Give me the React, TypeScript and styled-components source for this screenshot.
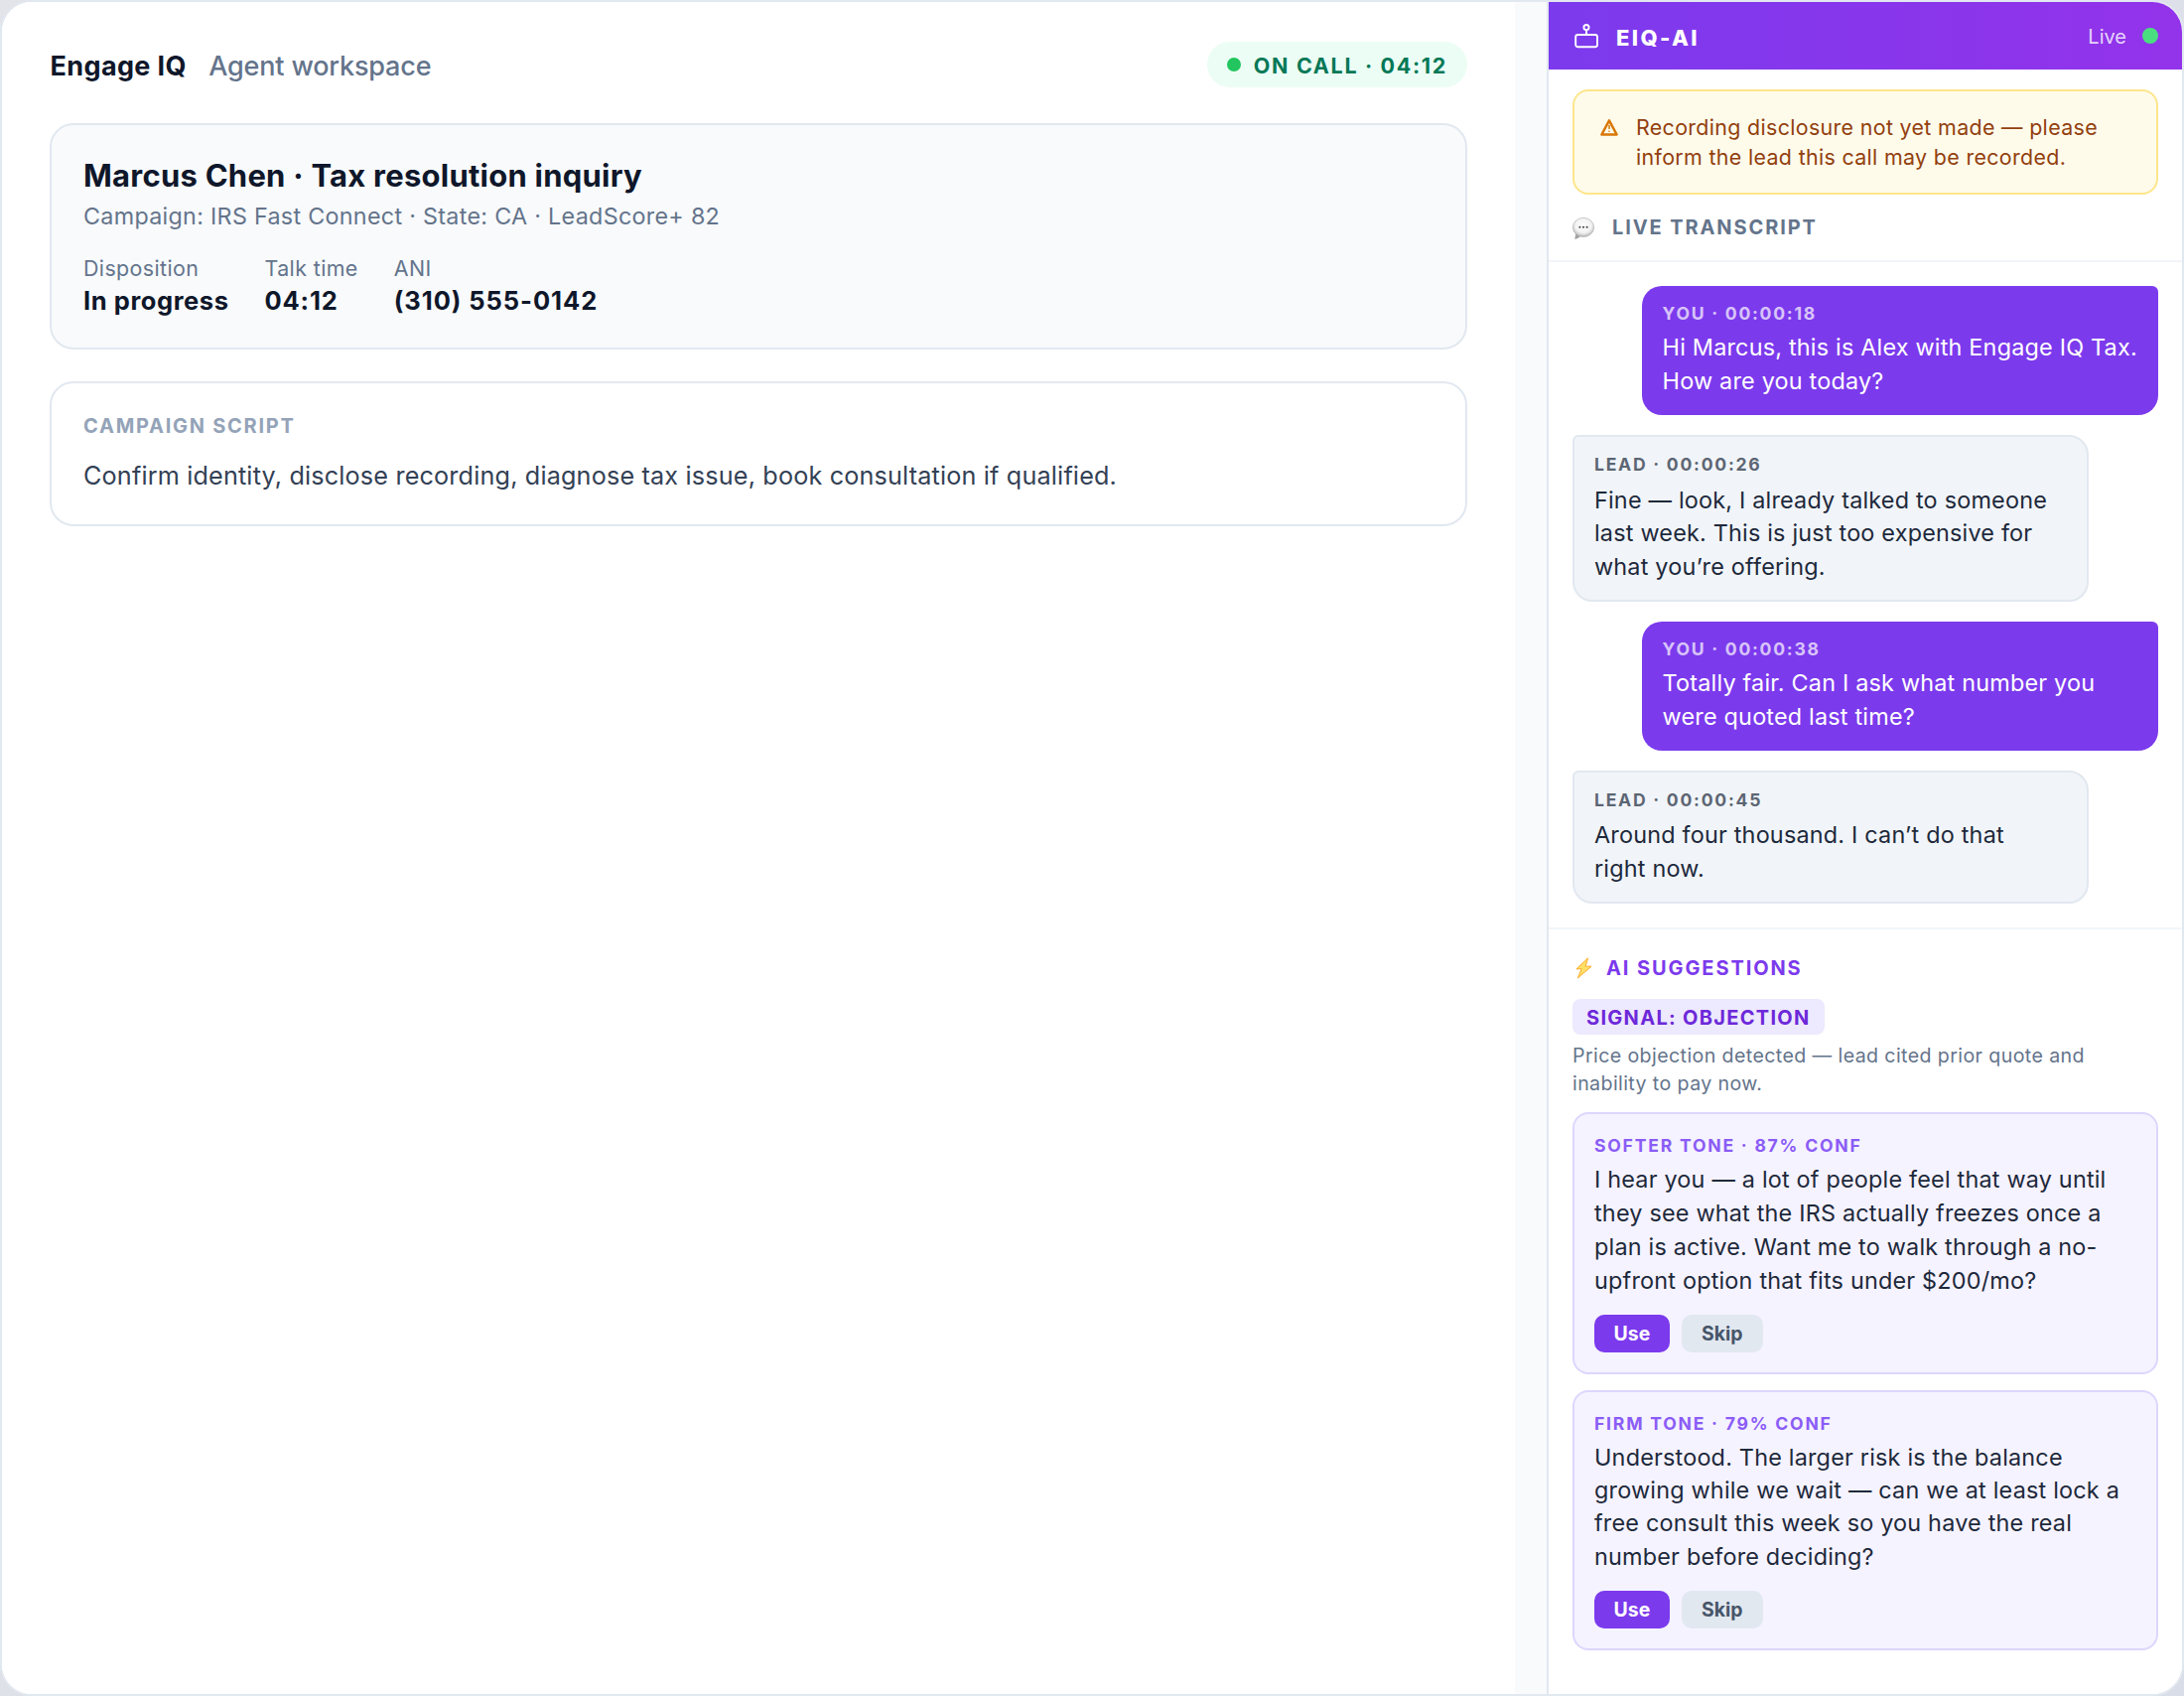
import React from "react";
import styled, { createGlobalStyle, css } from "styled-components";

const Global = createGlobalStyle`
  *, *::before, *::after { box-sizing: border-box; }
  html, body { margin: 0; padding: 0; }
  body {
    background: linear-gradient(135deg, #e3e4ea, #d9dde7);
    font-family: Inter, "Liberation Sans", sans-serif;
    -webkit-font-smoothing: antialiased;
  }
`;

const Frame = styled.div`
  display: grid;
  grid-template-columns: 1524px 32px 640px;
  width: 2200px;
  height: 1708px;
  border: 2px solid #e2e8f0;
  border-radius: 32px;
  overflow: hidden;
  background: #fff;
`;

const Workspace = styled.main`
  display: flex;
  flex-direction: column;
  padding: 40px 48px;
  background: #fff;
`;

const Gutter = styled.div`
  background: #f8fafc;
`;

const TopBar = styled.header`
  display: flex;
  align-items: center;
  justify-content: space-between;
  height: 46px;
`;

const Brand = styled.div`
  display: flex;
  align-items: baseline;
  gap: 22.4px;
  padding-top: 3px;
  padding-left: 0.5px;
  font-size: 27px;
  line-height: 36px;
`;

const BrandName = styled.span`
  font-weight: 700;
  letter-spacing: 0.37px;
  color: #0f172a;
`;

const BrandSub = styled.span`
  font-weight: 500;
  letter-spacing: -0.17px;
  color: #64748b;
`;

const CallPill = styled.div`
  display: flex;
  align-items: center;
  gap: 13px;
  height: 46px;
  padding: 0 20px;
  border-radius: 23px;
  background: #ecfdf5;
  color: #047857;
  font-size: 21.5px;
  font-weight: 700;
  letter-spacing: 1.67px;
`;

const PillLabel = styled.span`
  padding-top: 2px;
`;

const Dot = styled.span<{ $size: number; $color: string }>`
  flex: none;
  width: ${(p) => p.$size}px;
  height: ${(p) => p.$size}px;
  border-radius: 50%;
  background: ${(p) => p.$color};
`;

const Card = styled.section<{ $tinted?: boolean }>`
  border: 2px solid #e2e8f0;
  border-radius: 24px;
  padding: 0 32px;
  background: ${(p) => (p.$tinted ? "#f8fafc" : "#fff")};
`;

const LeadCard = styled(Card)`
  height: 228px;
  margin-top: 36px;
  padding-top: 30px;
`;

const ScriptCard = styled(Card)`
  height: 146px;
  margin-top: 32px;
  padding-top: 29px;
`;

const LeadTitle = styled.h1`
  margin: 0;
  font-size: 31px;
  line-height: 42px;
  font-weight: 700;
  letter-spacing: 0.24px;
  color: #0f172a;
`;

const LeadMeta = styled.p`
  margin: 2px 0 0;
  font-size: 23.3px;
  line-height: 36px;
  letter-spacing: 0.3px;
  color: #64748b;
`;

const Stats = styled.dl`
  display: flex;
  gap: 36px;
  margin: 19px 0 0;
`;

const StatLabel = styled.dt`
  font-size: 21.4px;
  line-height: 30px;
  letter-spacing: 0.4px;
  color: #64748b;
`;

const StatValue = styled.dd<{ $tracking: number }>`
  margin: 0;
  font-size: 25.5px;
  line-height: 36px;
  font-weight: 700;
  letter-spacing: ${(p) => p.$tracking}px;
  color: #0f172a;
`;

const ScriptHeading = styled.h2`
  margin: 0;
  font-size: 20px;
  line-height: 28px;
  font-weight: 700;
  letter-spacing: 1.73px;
  color: #94a3b8;
`;

const ScriptText = styled.p`
  margin: 16px 0 0;
  font-size: 25.2px;
  line-height: 40px;
  letter-spacing: 0.17px;
  color: #334155;
`;

const Panel = styled.aside`
  display: flex;
  flex-direction: column;
  border-left: 2px solid #e2e8f0;
  background: #fff;
`;

const PanelHeader = styled.header`
  display: flex;
  align-items: center;
  height: 68px;
  padding: 0 24px 0 26px;
  background: linear-gradient(90deg, #7c3aed, #9333ea);
  color: #fff;
`;

const PanelTitle = styled.span`
  margin-left: 18px;
  padding-top: 3px;
  font-size: 22px;
  line-height: 28px;
  font-weight: 800;
  letter-spacing: 2.35px;
`;

const LiveStatus = styled.span`
  display: flex;
  align-items: center;
  gap: 16px;
  margin-left: auto;
  font-size: 20px;
  line-height: 28px;
  color: rgba(255, 255, 255, 0.8);
`;

const LiveLabel = styled.span`
  padding-top: 2px;
`;

const Notice = styled.div`
  display: flex;
  gap: 18px;
  height: 106px;
  margin: 20px 24px 0;
  padding: 21px 24px 0 26px;
  border: 2px solid #fde68a;
  border-radius: 16px;
  background: #fffbeb;
  color: #92400e;
  font-size: 21.4px;
  line-height: 30px;
  letter-spacing: 0.34px;
  white-space: pre-line;
`;

const NoticeIcon = styled.span`
  flex: none;
  padding-top: 7px;
  line-height: 0;
`;

const SectionHeading = styled.h2<{ $accent?: boolean }>`
  display: flex;
  align-items: center;
  margin: 0;
  font-size: 20px;
  line-height: 28px;
  font-weight: 700;
  letter-spacing: 1.9px;
  color: ${(p) => (p.$accent ? "#7c3aed" : "#64748b")};
`;

const TranscriptHeader = styled.div`
  height: 68px;
  padding: 19px 24px 0;
  border-bottom: 2px solid #f1f5f9;
`;

const Transcript = styled.div`
  display: flex;
  flex-direction: column;
  gap: 20px;
  height: 672px;
  padding: 24px;
  border-bottom: 2px solid #f1f5f9;
`;

const BubbleMeta = styled.div`
  margin-bottom: 4.4px;
  font-size: 17.6px;
  line-height: 26px;
  font-weight: 700;
  letter-spacing: 1.74px;
  opacity: 0.7;
`;

const Bubble = styled.article<{ $own: boolean }>`
  width: 520px;
  padding: 15px 20px 0;
  font-size: 23.4px;
  line-height: 33.6px;
  letter-spacing: 0.2px;
  white-space: pre;
  ${(p) =>
    p.$own
      ? css`
          align-self: flex-end;
          height: 130px;
          padding-left: 20.6px;
          border-radius: 20px 6px 20px 20px;
          background: #7c3aed;
          color: #fff;
        `
      : css`
          align-self: flex-start;
          padding-bottom: 16.4px;
          border: 2px solid #e2e8f0;
          border-radius: 6px 20px 20px 20px;
          background: #f1f5f9;
          color: #1e293b;

          ${BubbleMeta} {
            margin-bottom: 5.5px;
          }
        `}
`;

const Suggestions = styled.section`
  display: flex;
  flex-direction: column;
  padding: 25px 24px 24px;
`;

const Signal = styled.span`
  align-self: flex-start;
  height: 36px;
  margin-top: 17px;
  padding: 0 14px;
  border-radius: 8px;
  background: #ede9fe;
  color: #6d28d9;
  font-size: 20px;
  line-height: 38px;
  font-weight: 700;
  letter-spacing: 1.3px;
`;

const Reason = styled.p`
  margin: 7px 0 -1px;
  font-size: 19.6px;
  line-height: 28px;
  letter-spacing: 0.4px;
  white-space: pre;
  color: #64748b;
`;

const SuggestionCard = styled.article`
  margin-top: 16px;
  padding: 18.5px 20px 20px;
  border: 2px solid #ddd6fe;
  border-radius: 16px;
  background: #f5f3ff;
`;

const SuggestionMeta = styled.div`
  font-size: 17.6px;
  line-height: 26px;
  font-weight: 700;
  letter-spacing: 1.77px;
  color: #8b5cf6;
`;

const SuggestionText = styled.p<{ $leading: number }>`
  margin: 4px 0 0;
  font-size: 23.4px;
  line-height: ${(p) => p.$leading}px;
  letter-spacing: 0.2px;
  white-space: pre;
  color: #1e293b;
`;

const Actions = styled.div`
  display: flex;
  gap: 12px;
  margin-top: 17.5px;
`;

const Action = styled.button<{ $primary?: boolean }>`
  height: 38px;
  padding: 0 ${(p) => (p.$primary ? 19.6 : 20.2)}px;
  border: 0;
  border-radius: 10px;
  font: 700 19.4px/38px Inter, "Liberation Sans", sans-serif;
  background: ${(p) => (p.$primary ? "#7c3aed" : "#e2e8f0")};
  color: ${(p) => (p.$primary ? "#fff" : "#475569")};
`;

const IconSlot = styled.span<{ $gap: number; $drop?: number }>`
  line-height: 0;
  padding-top: ${(p) => p.$drop ?? 0}px;
  margin-right: ${(p) => p.$gap}px;
`;

const BotIcon = () => (
  <svg width="24" height="26" viewBox="0 0 24 26" fill="none" stroke="#fff" strokeWidth="1.9">
    <rect x="1.2" y="12" width="21.8" height="12.2" rx="2.2" />
    <circle cx="12" cy="4.6" r="2.6" />
    <path d="M12 7.4V12" />
  </svg>
);

const WarningIcon = () => (
  <svg width="18" height="17" viewBox="0 0 18 17" fill="none" stroke="#d97706" strokeLinejoin="round" strokeLinecap="round">
    <path d="M9 1.4 L16.6 15.5 H1.4 Z" strokeWidth="2.5" />
    <path d="M9 6.6V9.6" strokeWidth="1.5" />
    <path d="M9 12.2V12.3" strokeWidth="1.6" />
  </svg>
);

const SpeechIcon = () => (
  <svg width="22" height="22" viewBox="0 0 22 22">
    <defs>
      <radialGradient id="speech" cx="0.5" cy="0.4" r="0.6">
        <stop offset="0" stopColor="#ffffff" />
        <stop offset="0.65" stopColor="#f1f1f1" />
        <stop offset="1" stopColor="#b5b5b5" />
      </radialGradient>
    </defs>
    <path d="M3.6 15 L2.2 21.8 C4.8 21.4 7 20 8.4 18.4 Z" fill="#a3a3a3" />
    <ellipse cx="11" cy="10" rx="10.6" ry="9.6" fill="url(#speech)" stroke="#b3b3b3" strokeWidth="0.7" />
    <circle cx="7.4" cy="9.8" r="1.05" fill="#444" />
    <circle cx="11" cy="9.8" r="1.05" fill="#444" />
    <circle cx="14.6" cy="9.8" r="1.05" fill="#444" />
  </svg>
);

const BoltIcon = () => (
  <svg width="22" height="22" viewBox="0 0 22 22">
    <path
      d="M15.6 0.9 L3.9 11.9 L9.2 11.7 L5.3 21 L19.1 9.2 L13.2 9.2 Z"
      fill="#ffe066"
      stroke="#fbab2e"
      strokeWidth="1"
      strokeLinejoin="round"
    />
  </svg>
);

const stats = [
  { label: "Disposition", value: "In progress", tracking: 0.58 },
  { label: "Talk time", value: "04:12", tracking: 0.8 },
  { label: "ANI", value: "(310) 555-0142", tracking: 0.94 },
];

const messages = [
  { own: true, meta: "YOU · 00:00:18", text: "Hi Marcus, this is Alex with Engage IQ Tax.\nHow are you today?" },
  {
    own: false,
    meta: "LEAD · 00:00:26",
    text: "Fine — look, I already talked to someone\nlast week. This is just too expensive for\nwhat you’re offering.",
  },
  { own: true, meta: "YOU · 00:00:38", text: "Totally fair. Can I ask what number you\nwere quoted last time?" },
  { own: false, meta: "LEAD · 00:00:45", text: "Around four thousand. I can’t do that\nright now." },
];

const suggestions = [
  {
    meta: "SOFTER TONE · 87% CONF",
    leading: 34,
    text: "I hear you — a lot of people feel that way until\nthey see what the IRS actually freezes once a\nplan is active. Want me to walk through a no-\nupfront option that fits under $200/mo?",
  },
  {
    meta: "FIRM TONE · 79% CONF",
    leading: 33.4,
    text: "Understood. The larger risk is the balance\ngrowing while we wait — can we at least lock a\nfree consult this week so you have the real\nnumber before deciding?",
  },
];

export default function App() {
  return (
    <>
      <Global />
      <Frame>
        <Workspace>
          <TopBar>
            <Brand>
              <BrandName>Engage IQ</BrandName>
              <BrandSub>Agent workspace</BrandSub>
            </Brand>
            <CallPill>
              <Dot $size={14} $color="#22c55e" />
              <PillLabel>ON CALL · 04:12</PillLabel>
            </CallPill>
          </TopBar>
          <LeadCard $tinted>
            <LeadTitle>Marcus Chen · Tax resolution inquiry</LeadTitle>
            <LeadMeta>Campaign: IRS Fast Connect · State: CA · LeadScore+ 82</LeadMeta>
            <Stats>
              {stats.map((s) => (
                <div key={s.label}>
                  <StatLabel>{s.label}</StatLabel>
                  <StatValue $tracking={s.tracking}>{s.value}</StatValue>
                </div>
              ))}
            </Stats>
          </LeadCard>
          <ScriptCard>
            <ScriptHeading>CAMPAIGN SCRIPT</ScriptHeading>
            <ScriptText>Confirm identity, disclose recording, diagnose tax issue, book consultation if qualified.</ScriptText>
          </ScriptCard>
        </Workspace>
        <Gutter />
        <Panel>
          <PanelHeader>
            <BotIcon />
            <PanelTitle>EIQ-AI</PanelTitle>
            <LiveStatus>
              <LiveLabel>Live</LiveLabel>
              <Dot $size={16} $color="#4ade80" />
            </LiveStatus>
          </PanelHeader>
          <Notice>
            <NoticeIcon>
              <WarningIcon />
            </NoticeIcon>
            <span>{"Recording disclosure not yet made — please\ninform the lead this call may be recorded."}</span>
          </Notice>
          <TranscriptHeader>
            <SectionHeading>
              <IconSlot $gap={18} $drop={2}>
                <SpeechIcon />
              </IconSlot>
              LIVE TRANSCRIPT
            </SectionHeading>
          </TranscriptHeader>
          <Transcript>
            {messages.map((m) => (
              <Bubble key={m.meta} $own={m.own}>
                <BubbleMeta>{m.meta}</BubbleMeta>
                {m.text}
              </Bubble>
            ))}
          </Transcript>
          <Suggestions>
            <SectionHeading $accent>
              <IconSlot $gap={12}>
                <BoltIcon />
              </IconSlot>
              AI SUGGESTIONS
            </SectionHeading>
            <Signal>SIGNAL: OBJECTION</Signal>
            <Reason>{"Price objection detected — lead cited prior quote and\ninability to pay now."}</Reason>
            {suggestions.map((s) => (
              <SuggestionCard key={s.meta}>
                <SuggestionMeta>{s.meta}</SuggestionMeta>
                <SuggestionText $leading={s.leading}>{s.text}</SuggestionText>
                <Actions>
                  <Action $primary>Use</Action>
                  <Action>Skip</Action>
                </Actions>
              </SuggestionCard>
            ))}
          </Suggestions>
        </Panel>
      </Frame>
    </>
  );
}
